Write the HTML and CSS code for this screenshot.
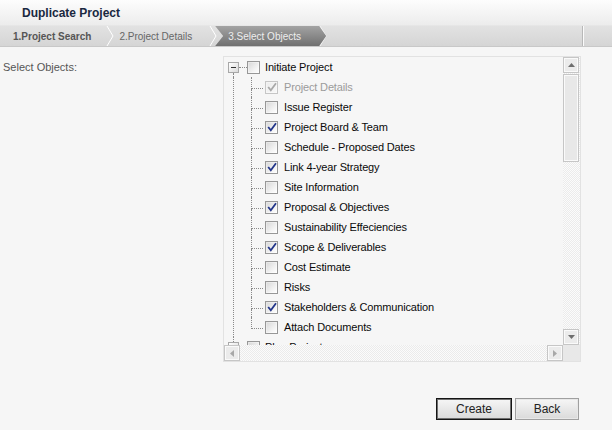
FILE: index.html
```html
<!DOCTYPE html>
<html>
<head>
<meta charset="utf-8">
<title>Duplicate Project</title>
<link rel="stylesheet" href="styles.css">
</head>
<body>
<div class="dialog">
  <header class="titlebar"><h1 class="title">Duplicate Project</h1></header>
  <nav class="crumbs">
    <span class="crumb crumb-first">1.Project Search</span>
    <svg class="sep" width="8" height="20" viewBox="0 0 8 20"><polyline points="1,0 7,10 1,20" fill="none" stroke="#fff" stroke-width="1"/></svg>
    <span class="crumb crumb-second">2.Project Details</span>
    <svg class="sep" width="8" height="20" viewBox="0 0 8 20"><polyline points="1,0 7,10 1,20" fill="none" stroke="#fff" stroke-width="1"/></svg>
    <span class="crumb crumb-active">3.Select Objects</span>
    <svg class="sep sep-after" width="8" height="20" viewBox="0 0 8 20"><polyline points="1,0 7,10 1,20" fill="none" stroke="#f4f4f4" stroke-width="1"/></svg>
    <span class="crumb-end"></span>
  </nav>
  <main class="content">
    <div class="field-label">Select Objects:</div>
    <div class="tree">
      <div class="tree-view">
        <div class="node-row root-row">
          <span class="exp-col first"><span class="expander minus"></span></span>
          <span class="hline"></span>
          <span class="cb"></span>
          <span class="node-text">Initiate Project</span>
        </div>
        <div class="children">
          <div class="node-row child-row"><span class="branch"></span><span class="cb checked disabled"><svg width="10" height="10" viewBox="0 0 10 10"><path d="M1.2 5 L3.8 8.2 L9 1.2" fill="none" stroke="#a9a9a9" stroke-width="1.8"/></svg></span><span class="node-text disabled-text">Project Details</span></div>
          <div class="node-row child-row"><span class="branch"></span><span class="cb"></span><span class="node-text">Issue Register</span></div>
          <div class="node-row child-row"><span class="branch"></span><span class="cb checked"><svg width="10" height="10" viewBox="0 0 10 10"><path d="M1.2 5 L3.8 8.2 L9 1.2" fill="none" stroke="#22358a" stroke-width="1.8"/></svg></span><span class="node-text">Project Board &amp; Team</span></div>
          <div class="node-row child-row"><span class="branch"></span><span class="cb"></span><span class="node-text">Schedule - Proposed Dates</span></div>
          <div class="node-row child-row"><span class="branch"></span><span class="cb checked"><svg width="10" height="10" viewBox="0 0 10 10"><path d="M1.2 5 L3.8 8.2 L9 1.2" fill="none" stroke="#22358a" stroke-width="1.8"/></svg></span><span class="node-text">Link 4-year Strategy</span></div>
          <div class="node-row child-row"><span class="branch"></span><span class="cb"></span><span class="node-text">Site Information</span></div>
          <div class="node-row child-row"><span class="branch"></span><span class="cb checked"><svg width="10" height="10" viewBox="0 0 10 10"><path d="M1.2 5 L3.8 8.2 L9 1.2" fill="none" stroke="#22358a" stroke-width="1.8"/></svg></span><span class="node-text">Proposal &amp; Objectives</span></div>
          <div class="node-row child-row"><span class="branch"></span><span class="cb"></span><span class="node-text">Sustainability Effeciencies</span></div>
          <div class="node-row child-row"><span class="branch"></span><span class="cb checked"><svg width="10" height="10" viewBox="0 0 10 10"><path d="M1.2 5 L3.8 8.2 L9 1.2" fill="none" stroke="#22358a" stroke-width="1.8"/></svg></span><span class="node-text">Scope &amp; Deliverables</span></div>
          <div class="node-row child-row"><span class="branch"></span><span class="cb"></span><span class="node-text">Cost Estimate</span></div>
          <div class="node-row child-row"><span class="branch"></span><span class="cb"></span><span class="node-text">Risks</span></div>
          <div class="node-row child-row"><span class="branch"></span><span class="cb checked"><svg width="10" height="10" viewBox="0 0 10 10"><path d="M1.2 5 L3.8 8.2 L9 1.2" fill="none" stroke="#22358a" stroke-width="1.8"/></svg></span><span class="node-text">Stakeholders &amp; Communication</span></div>
          <div class="node-row child-row last"><span class="branch"></span><span class="cb"></span><span class="node-text">Attach Documents</span></div>
        </div>
        <div class="node-row root-row">
          <span class="exp-col"><span class="expander plus"></span></span>
          <span class="hline"></span>
          <span class="cb"></span>
          <span class="node-text">Plan Project</span>
        </div>
      </div>
      <div class="vscroll">
        <span class="sb-btn"><svg width="7" height="4" viewBox="0 0 7 4"><path d="M3.5 0 L7 4 L0 4 Z" fill="#6e6e6e"/></svg></span>
        <span class="thumb"></span>
        <span class="track"></span>
        <span class="sb-btn"><svg width="7" height="4" viewBox="0 0 7 4"><path d="M0 0 L7 0 L3.5 4 Z" fill="#6e6e6e"/></svg></span>
      </div>
      <div class="hscroll">
        <span class="sb-btn"><svg width="4" height="7" viewBox="0 0 4 7"><path d="M4 0 L4 7 L0 3.5 Z" fill="#a8a8a8"/></svg></span>
        <span class="track"></span>
        <span class="sb-btn"><svg width="4" height="7" viewBox="0 0 4 7"><path d="M0 0 L4 3.5 L0 7 Z" fill="#a8a8a8"/></svg></span>
      </div>
      <div class="corner"></div>
    </div>
  </main>
  <footer class="actions">
    <button class="btn btn-primary">Create</button>
    <button class="btn btn-back">Back</button>
  </footer>
</div>
</body>
</html>
```
FILE: styles.css
```css
* { box-sizing: border-box; }
html, body { margin: 0; padding: 0; }
body {
  background: #f6f6f6;
  font-family: "Liberation Sans", Arial, sans-serif;
  width: 612px;
  height: 430px;
  overflow: hidden;
}

.titlebar {
  height: 26px;
  background: linear-gradient(#fdfdfd, #ececec);
  border-bottom: 1px solid #e6e6e6;
}
.title {
  margin: 0;
  padding: 1px 0 0 22px;
  font-size: 12px;
  font-weight: bold;
  line-height: 24px;
  color: #1a2840;
}

.crumbs {
  display: flex;
  height: 21px;
  background: linear-gradient(#e2e2e2, #d5d5d5);
  border-bottom: 1px solid #c8c8c8;
}
.crumb {
  display: flex;
  align-items: center;
  font-size: 10px;
  color: #666;
}
.crumb-first {
  font-weight: bold;
  color: #555;
  padding: 0 15px 0 13px;
}
.crumb-second {
  padding: 0 17px 0 5px;
}
.sep { flex: none; }
.crumb-active {
  margin-left: -2px;
  padding: 0 0 0 13px;
  width: 111px;
  color: #eeeeee;
  background: linear-gradient(#a3a3a3, #707070);
  clip-path: polygon(0 0, calc(100% - 7px) 0, 100% 50%, calc(100% - 7px) 100%, 0 100%, 8px 50%);
}
.sep-after { margin-left: -7px; }
.crumb-end {
  margin-left: auto;
  width: 30px;
  border-left: 1px solid #b8b8b8;
  box-shadow: inset 1px 0 #fbfbfb;
}

.content {
  display: flex;
  padding-top: 9px;
}
.field-label {
  width: 223px;
  padding-left: 3px;
  margin-top: 1px;
  font-size: 11px;
  line-height: 20px;
  color: #555;
}

.tree {
  width: 358px;
  height: 306px;
  border: 1px solid #e2e2e2;
  display: grid;
  grid-template-columns: 339px 17px;
  grid-template-rows: 288px 16px;
}
.tree-view {
  overflow: hidden;
  font-size: 11px;
  letter-spacing: -0.15px;
  color: #0a0a0a;
}

.node-row {
  display: flex;
  align-items: center;
  height: 20px;
  white-space: nowrap;
}
.root-row { padding-left: 4px; }
.exp-col {
  width: 11px;
  align-self: stretch;
  display: flex;
  flex-direction: column;
  flex: none;
}
.exp-col::before {
  content: "";
  height: 5px;
  margin-left: 5px;
  border-left: 1px dotted #8a8a8a;
}
.exp-col.first::before { border-left-color: transparent; }
.exp-col::after {
  content: "";
  flex: 1;
  margin-left: 5px;
  border-left: 1px dotted #8a8a8a;
}
.expander {
  width: 11px;
  height: 11px;
  border: 1px solid #a8a8a8;
  background: linear-gradient(135deg, #ffffff, #dadada);
  display: flex;
  align-items: center;
  justify-content: center;
  flex: none;
}
.expander::after {
  content: "";
  width: 5px;
  height: 1px;
  background: #333;
}
.expander.plus {
  background-image: linear-gradient(#333, #333), linear-gradient(135deg, #ffffff, #dadada);
  background-size: 1px 5px, 100% 100%;
  background-position: center, 0 0;
  background-repeat: no-repeat;
}
.hline {
  width: 8px;
  height: 0;
  border-top: 1px dotted #8a8a8a;
  flex: none;
}

.children {
  margin-left: 9px;
  border-left: 1px dotted #8a8a8a;
}
.child-row { padding-left: 17px; }
.branch {
  width: 12px;
  align-self: stretch;
  display: flex;
  flex-direction: column;
  margin-right: 2px;
  flex: none;
}
.branch::before {
  content: "";
  height: 11px;
  border-left: 1px dotted #8a8a8a;
  border-bottom: 1px dotted #8a8a8a;
}
.branch::after {
  content: "";
  flex: 1;
  border-left: 1px dotted #8a8a8a;
}
.last .branch::after { border-left-color: transparent; }

.cb {
  width: 13px;
  height: 13px;
  flex: none;
  border: 1px solid #979797;
  background: linear-gradient(135deg, #d6d6d6, #f3f3f3 65%, #ffffff);
  box-shadow: inset 0 0 0 1px rgba(255,255,255,0.35);
  display: flex;
  align-items: center;
  justify-content: center;
  margin-right: 5px;
}
.child-row .cb { margin-right: 6px; }
.cb.disabled {
  border-color: #c6c6c6;
  background: linear-gradient(135deg, #ececec, #f8f8f8);
}
.disabled-text { color: #9b9b9b; }

.vscroll {
  display: flex;
  flex-direction: column;
  padding-right: 1px;
  background: repeating-conic-gradient(#ebebeb 0 25%, #fbfbfb 0 50%) 0 0 / 2px 2px;
}
.hscroll {
  display: flex;
  background: repeating-conic-gradient(#ebebeb 0 25%, #fbfbfb 0 50%) 0 0 / 2px 2px;
}
.sb-btn {
  width: 16px;
  height: 16px;
  flex: none;
  background: #ebebeb;
  border: 1px solid #c6c6c6;
  box-shadow: inset 1px 1px #fafafa, inset -1px -1px #fafafa;
  display: flex;
  align-items: center;
  justify-content: center;
}
.thumb {
  height: 88px;
  margin-top: 1px;
  flex: none;
  background: #e8e8e8;
  border: 1px solid #c6c6c6;
  box-shadow: inset 1px 1px #fafafa, inset -1px -1px #fafafa;
}
.track { flex: 1; }
.corner { background: #e8e8e8; }

.actions {
  display: flex;
  justify-content: flex-end;
  gap: 3px;
  padding-right: 33px;
  margin-top: 36px;
}
.btn {
  height: 22px;
  padding: 0;
  font-family: "Liberation Sans", Arial, sans-serif;
  font-size: 12px;
  color: #222;
  background: linear-gradient(#f6f6f6, #dadada);
  cursor: default;
}
.btn-primary {
  width: 76px;
  border: 1px solid #151515;
  box-shadow: inset 0 0 0 1px #6f6f6f;
}
.btn-back {
  width: 64px;
  border: 1px solid #a0a0a0;
  box-shadow: inset 0 0 0 1px #e8e8e8;
}
```
